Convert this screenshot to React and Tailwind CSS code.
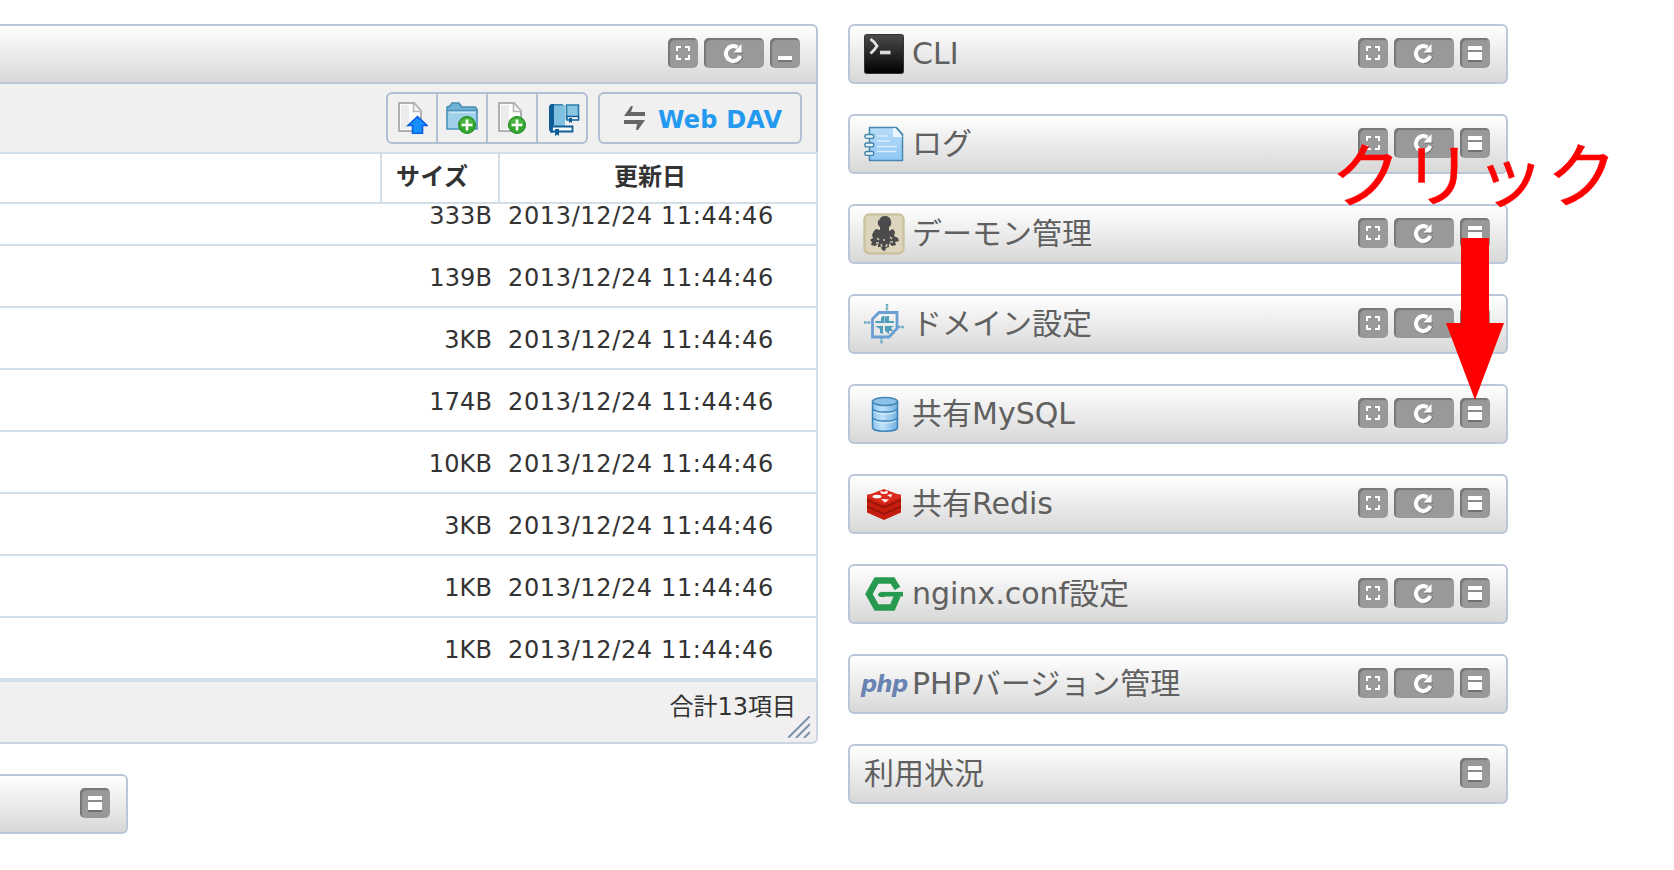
import React from "react";

const font = "font-['DejaVu_Sans','Noto_Sans_CJK_JP',sans-serif]";
const buttonBase =
  "flex h-[30px] items-center justify-center rounded-[5px] bg-[#999] shadow-[inset_2px_2px_1px_#777]";

function ExpandButton() {
  return (
    <button className={`${buttonBase} w-[30px]`}>
      <svg width="30" height="30" viewBox="0 0 30 30" fill="none" stroke="#fff" strokeWidth="2">
        <path d="M9 13V9h4M17 9h4v4M21 17v4h-4M13 21H9v-4" />
      </svg>
    </button>
  );
}

function ReloadButton() {
  return (
    <button className={`${buttonBase} w-[60px]`}>
      <svg width="30" height="30" viewBox="0 0 30 30">
        <path d="M23.500 18a10 10 0 0 1-8.500 7.500M24 15h-8" stroke="#777" strokeWidth="1.600" fill="none" />
        <path d="M18.500 9.400A7.400 7.400 0 1 0 21.300 18" fill="none" stroke="#fff" strokeWidth="4" />
        <path d="M22.500 6v8.500H14.500z" fill="#fff" />
      </svg>
    </button>
  );
}

function MinimizeButton() {
  return (
    <button className={`${buttonBase} w-[30px]`}>
      <svg width="30" height="30" viewBox="0 0 30 30">
        <path d="M8 22h14v2H8z" fill="#777" />
        <path d="M8 18h14v4H8z" fill="#fff" />
      </svg>
    </button>
  );
}

function RestoreButton() {
  return (
    <button className={`${buttonBase} w-[30px]`}>
      <svg width="30" height="30" viewBox="0 0 30 30">
        <path d="M8 22h14v2H8z" fill="#707070" />
        <path d="M8 12h14v2H8z" fill="#8a8a8a" />
        <path d="M8 8h14v4H8zM8 14h14v8H8z" fill="#fff" />
      </svg>
    </button>
  );
}

function Plus() {
  return (
    <g>
      <circle cx="21" cy="23" r="8.500" fill="#35a52c" stroke="#1f8c22" strokeWidth="1" />
      <path d="M14 21a7.500 7.500 0 0 1 14 0q-7 3-14 0z" fill="#5cc04c" opacity=".6" />
      <path d="M21 17.500v11M15.500 23h11" stroke="#fff" strokeWidth="2.600" />
    </g>
  );
}

function Page() {
  return (
    <g>
      <path d="M3 1h15l7 8v20H3z" fill="#fdfdfd" stroke="#b0b0b0" strokeWidth="2" />
      <path d="M5 3h8v24H5z" fill="#ececec" />
      <path d="M17.500 2v7.500H25" fill="#f6f6f6" stroke="#b8b8b8" strokeWidth="1.600" />
    </g>
  );
}

function UploadIcon() {
  return (
    <svg width="32" height="32" viewBox="0 0 32 32">
      <Page />
      <path d="M21.500 14.500l9.500 9h-4.500v8h-10v-8H12z" fill="#1690ff" stroke="#0a5ce0" strokeWidth="1.600" />
    </svg>
  );
}

function NewFolderIcon() {
  return (
    <svg width="32" height="32" viewBox="0 0 32 32">
      <path d="M1 9V5l3-1 2-3h7l3 4h13l2 2v4H1z" fill="#6fb2d4" stroke="#4a8cb2" strokeWidth="1.500" />
      <path d="M1 8.500h30V27H1z" fill="#9fcfe9" stroke="#4f93ba" strokeWidth="1.600" />
      <path d="M3 10.500h26" stroke="#c9e6f5" strokeWidth="1.500" />
      <Plus />
    </svg>
  );
}

function NewFileIcon() {
  return (
    <svg width="32" height="32" viewBox="0 0 32 32">
      <Page />
      <Plus />
    </svg>
  );
}

function BookIcon() {
  return (
    <svg width="32" height="32" viewBox="0 0 32 32" className="ml-[6px]">
      <path d="M2 1h14v23H2z" fill="#7fc0e0" />
      <path d="M0 2l2-2h3v21l-1.500 1v7H2l-2-3z" fill="#0f5f96" />
      <path d="M5 .8h9" stroke="#3b86b3" strokeWidth="1.600" />
      <path d="M3 22.500h20.500v5H3z" fill="#fff" stroke="#0f5f96" strokeWidth="1.800" />
      <path d="M6 25h4v7l-2-1.500L6 32z" fill="#0f5f96" />
      <path d="M17.500 1h12v14h-12z" fill="#8ac6e4" stroke="#2a7cab" strokeWidth="1.600" />
      <path d="M18 12.500h11.500v3.500H18z" fill="#fff" stroke="#0f5f96" strokeWidth="1.400" />
      <path d="M20 14h3v5l-1.500-1L20 19z" fill="#0f5f96" />
    </svg>
  );
}

function CliIcon() {
  return (
    <svg width="40" height="40" viewBox="0 0 40 40">
      <defs>
        <linearGradient id="cli" x1="0" y1="0" x2="0" y2="1">
          <stop offset="0" stopColor="#4c4b49" />
          <stop offset=".5" stopColor="#262626" />
          <stop offset="1" stopColor="#000" />
        </linearGradient>
      </defs>
      <rect x=".5" y=".5" width="39" height="39" rx="2" fill="url(#cli)" stroke="#333" />
      <path d="M6.500 5l3.500 3 3 4-3 4-3.500 3.500" fill="none" stroke="#e4e4e4" strokeWidth="2.800" />
      <path d="M16 18.500h10.500" stroke="#ddd" strokeWidth="3.600" />
    </svg>
  );
}

function LogIcon() {
  return (
    <svg width="40" height="40" viewBox="0 0 40 40">
      <defs>
        <linearGradient id="log" x1="0" y1="0" x2="0" y2="1">
          <stop offset="0" stopColor="#b9dcf8" />
          <stop offset="1" stopColor="#8fc8f4" />
        </linearGradient>
      </defs>
      <path d="M5.500 3.500h27l6 7v26h-33z" fill="url(#log)" stroke="#4589b0" strokeWidth="1.500" />
      <path d="M29 4v9h9.500l-6-9z" fill="#e9f6ff" />
      <path d="M32 3.500l6.500 7" stroke="#4589b0" strokeWidth="1.500" />
      <path d="M13 12h11M13 17h13M13 22.500h20M13 27.500h19" stroke="#d7edfc" strokeWidth="1.500" />
      <g fill="#e8f6fc" stroke="#3f85a7" strokeWidth="1.300">
        <rect x=".8" y="10.500" width="9" height="3.800" rx="1.900" />
        <rect x=".8" y="19" width="9" height="3.800" rx="1.900" />
        <rect x=".8" y="27.500" width="9" height="3.800" rx="1.900" />
      </g>
    </svg>
  );
}

function DaemonIcon() {
  return (
    <svg width="42" height="42" viewBox="0 0 42 42" className="-mx-px">
      <rect x="1.500" y="1.500" width="39" height="39" rx="5" fill="#dcd4bc" stroke="#cdc2a0" strokeWidth="2.400" />
      <path d="M16 8q1-5 6-5t6 5q1 4-2 6v4l4-2 2 3-1 4 4 2 1 3-4 1 1 3-4 1-3-3 0 4-3 1-1 3-3-1-1-3-3 0 0-3-3 2-4-1 1-3-2-2 3-2-1-3 2-4 2-2 4 1v-3q-3-2-2-7z" fill="#4b4b4b" />
      <path d="M14 25l2 2M27 24l2 2M13 30h3M27 29h3M18 31l1 3M24 31l-1 3M20 27h2" stroke="#cfc6ad" strokeWidth="1.600" />
    </svg>
  );
}

function DomainIcon() {
  return (
    <svg width="40" height="40" viewBox="0 0 40 40" fill="none">
      <path d="M23 0v7M17.500 33v7M0 18.500h7M34 23h6" stroke="#6aaac3" strokeWidth="2.400" strokeDasharray="2.500 .8" />
      <path d="M15 8.500h18v16l-8 8.500H8.500V15z" stroke="#6b9fd2" strokeWidth="2.800" />
      <path d="M12 17h7v-5l-2 2v3M21 12l2 1 1 4h5v2h-8zM11 22h8v8l-3-1v-4zM21 22h9l-3 2 2 3h-4v3l-4-3z" fill="#4f9fba" />
      <path d="M11.500 18h8v-6M24 12v6h6" stroke="#4f9fba" strokeWidth="2" />
    </svg>
  );
}

function MysqlIcon() {
  return (
    <svg width="40" height="40" viewBox="0 0 40 40">
      <defs>
        <linearGradient id="db" x1="0" y1="0" x2="1" y2="0">
          <stop offset="0" stopColor="#8cc4f0" />
          <stop offset=".4" stopColor="#bfe2fb" />
          <stop offset="1" stopColor="#70b0e2" />
        </linearGradient>
      </defs>
      <path d="M8.500 7.500v26c0 5 25 5 25 0v-26z" fill="url(#db)" stroke="#3e83b5" strokeWidth="1.500" />
      <ellipse cx="21" cy="7.500" rx="12.500" ry="4" fill="#8dc3ea" stroke="#4387b6" strokeWidth="1.500" />
      <path d="M9 15c2 4 22 4 24 0M9 24c2 4 22 4 24 0" fill="none" stroke="#3e83b5" strokeWidth="1.600" />
      <path d="M10 17.500c3 3.500 19 3.500 22 0M10 26.500c3 3.500 19 3.500 22 0" fill="none" stroke="#d8effd" strokeWidth="1" />
    </svg>
  );
}

function RedisIcon() {
  return (
    <svg width="40" height="40" viewBox="0 0 40 40">
      <path d="M3 10.500v18L20 36l17-7.500v-18z" fill="#c41d0e" />
      <path d="M3 16l17 7.500L37 16M3 22.500L20 30l17-7.500" stroke="#96130a" strokeWidth="1.600" fill="none" />
      <path d="M3 11.500L20 5l17 6.500v1.500L20 20.500 3 13z" fill="#dc2b1d" />
      <path d="M16 7l4 1 3-1.500 1 2.500-3 1-4-.5zM23 11l5-1-1 3.500z" fill="#fff" />
      <ellipse cx="13" cy="12.500" rx="4.500" ry="1.800" fill="#fff" />
      <path d="M17 15l8 .5-4 3z" fill="#fff" />
    </svg>
  );
}

function NginxIcon() {
  return (
    <svg width="40" height="40" viewBox="0 0 40 40" fill="none">
      <path d="M33.500 14.500L28.500 6.500H12.500L5 20l7.500 13.500h16l5-12" stroke="#279a50" strokeWidth="6.600" />
      <path d="M39 20.200H18" stroke="#279a50" strokeWidth="4.600" />
      <path d="M14 20.500a4 3 0 0 1 4-2.600h3v5.200h-3a4 3 0 0 1-4-2.600z" fill="#279a50" />
    </svg>
  );
}

function PhpIcon() {
  return (
    <span className="flex w-10 justify-center text-[23px] leading-[30px] font-bold tracking-[-1px] text-[#6883b2] italic">
      php
    </span>
  );
}

const panels = [
  { title: "CLI", icon: <CliIcon /> },
  { title: "ログ", icon: <LogIcon /> },
  { title: "デーモン管理", icon: <DaemonIcon /> },
  { title: "ドメイン設定", icon: <DomainIcon /> },
  { title: "共有MySQL", icon: <MysqlIcon /> },
  { title: "共有Redis", icon: <RedisIcon /> },
  { title: "nginx.conf設定", icon: <NginxIcon /> },
  { title: "PHPバージョン管理", icon: <PhpIcon /> },
];

const sizes = ["139B", "3KB", "174B", "10KB", "3KB", "1KB", "1KB"];

function Panel({ title, icon }) {
  return (
    <section className="flex h-[60px] items-center rounded-[6px] border-2 border-[#bbc6d8] bg-linear-to-b from-white to-[#d8d8d8] pr-4 pl-[14px]">
      {icon}
      <h2 className={`${icon ? "ml-[8px]" : ""} flex-1 text-[30px] leading-[40px] whitespace-nowrap text-[#606060]`}>{title}</h2>
      <div className="mb-[2px] flex gap-[6px]">
        {icon && <ExpandButton />}
        {icon && <ReloadButton />}
        <RestoreButton />
      </div>
    </section>
  );
}

function Row({ size, first }) {
  return (
    <div
      className={`flex shrink-0 border-b-2 border-[#d2dee8] text-[24px] text-[#333] ${
        first ? "h-[42px] items-start pt-[2px] leading-[20px]" : "h-[62px] items-center pt-[3px]"
      }`}
    >
      <span className="w-[492px] text-right tracking-[0.1px]">{size}</span>
      <span className="ml-[16px] tracking-[0.64px] whitespace-nowrap">2013/12/24 11:44:46</span>
    </div>
  );
}

export default function App() {
  return (
    <div className={`relative h-[870px] w-[1674px] overflow-hidden bg-white pt-6 ${font}`}>
      <div className="flex items-start gap-[30px]">
        <div className="flex w-[818px] flex-col gap-[30px]">
          <section className="flex h-[720px] flex-col">
            <header className="flex h-[60px] shrink-0 items-center justify-end gap-[6px] rounded-tr-[6px] border-2 border-l-0 border-[#bbc6d8] bg-linear-to-b from-white to-[#d8d8d8] pr-4 pb-[2px]">
              <ExpandButton />
              <ReloadButton />
              <MinimizeButton />
            </header>
            <div className="flex h-[68px] shrink-0 items-center justify-end gap-[10px] border-r-2 border-[#bbc6d8] bg-[#f0f0f0] pr-[14px]">
              <div className="flex h-[52px] w-[202px] divide-x-2 divide-[#b1bfd3] rounded-[6px] border-2 border-[#b1bfd3]">
                <button className="flex w-[50px] items-center justify-center"><UploadIcon /></button>
                <button className="flex w-[50px] items-center justify-center"><NewFolderIcon /></button>
                <button className="flex w-[50px] items-center justify-center"><NewFileIcon /></button>
                <button className="flex w-[48px] items-center justify-center pt-[3px]"><BookIcon /></button>
              </div>
              <button className="flex h-[52px] w-[204px] items-center rounded-[6px] border-2 border-[#b1bfd3] pl-6 text-[24px] font-bold whitespace-nowrap text-[#2399f0]">
                <svg width="22" height="24" viewBox="0 0 22 24" className="shrink-0">
                  <path d="M0 10L7 0h2L7 6h14v4zM0 14h21l-7 10h-2l1-6H0z" fill="#666" />
                </svg>
                <span className="ml-[12px] pt-[3px] tracking-[0.2px]">Web DAV</span>
              </button>
            </div>
            <div className="flex h-[530px] shrink-0 flex-col overflow-hidden border-t-2 border-r-2 border-b-2 border-[#d2dee8]">
              <div className="flex h-[50px] shrink-0 items-center border-b-2 border-[#d2dee8] text-[24px] font-bold text-[#333]">
                <div className="h-full w-[380px]" />
                <div className="flex h-full w-[118px] items-center border-l-2 border-[#d2dee8] pb-[2px] pl-[14px] tracking-[0.4px]">サイズ</div>
                <div className="flex h-full flex-1 items-center justify-center border-l-2 border-[#d2dee8] pr-4 pb-[2px]">更新日</div>
              </div>
              <Row size="333B" first />
              {sizes.map((size, i) => (
                <Row key={i} size={size} />
              ))}
            </div>
            <footer className="relative flex h-[62px] shrink-0 justify-end rounded-br-[6px] border-r-2 border-b-2 border-[#ccd3e3] bg-[#f0f0f0] pt-[8px] pr-[20px] text-[24px] leading-[34px] text-[#333]">
              合計13項目
              <svg width="22" height="22" viewBox="0 0 22 22" className="absolute right-[6px] bottom-[4px]" stroke="#7e8fb0" strokeWidth="2">
                <path d="M0 22L22 0M8 22L22 8M16 22l6-6" />
              </svg>
            </footer>
          </section>
          <section className="flex h-[60px] w-[128px] items-center justify-end rounded-r-[6px] border-2 border-l-0 border-[#bbc6d8] bg-linear-to-b from-white to-[#d8d8d8] pr-4 pb-[2px]">
            <RestoreButton />
          </section>
        </div>
        <div className="flex w-[660px] flex-col gap-[30px]">
          {panels.map((p) => (
            <Panel key={p.title} {...p} />
          ))}
          <Panel title="利用状況" />
        </div>
      </div>
      <p className="absolute top-[120px] left-[1331px] font-['Noto_Sans_CJK_JP',sans-serif] text-[70px] leading-[104px] font-normal tracking-[2px] whitespace-nowrap text-[#f00] [-webkit-text-stroke:0.6px_#f00]">
        クリック
      </p>
      <svg className="absolute top-[238px] left-[1446px]" width="58" height="162" viewBox="0 0 58 162">
        <path d="M15 0h28v85h15L29 162 0 85h15z" fill="#f00" />
      </svg>
    </div>
  );
}
